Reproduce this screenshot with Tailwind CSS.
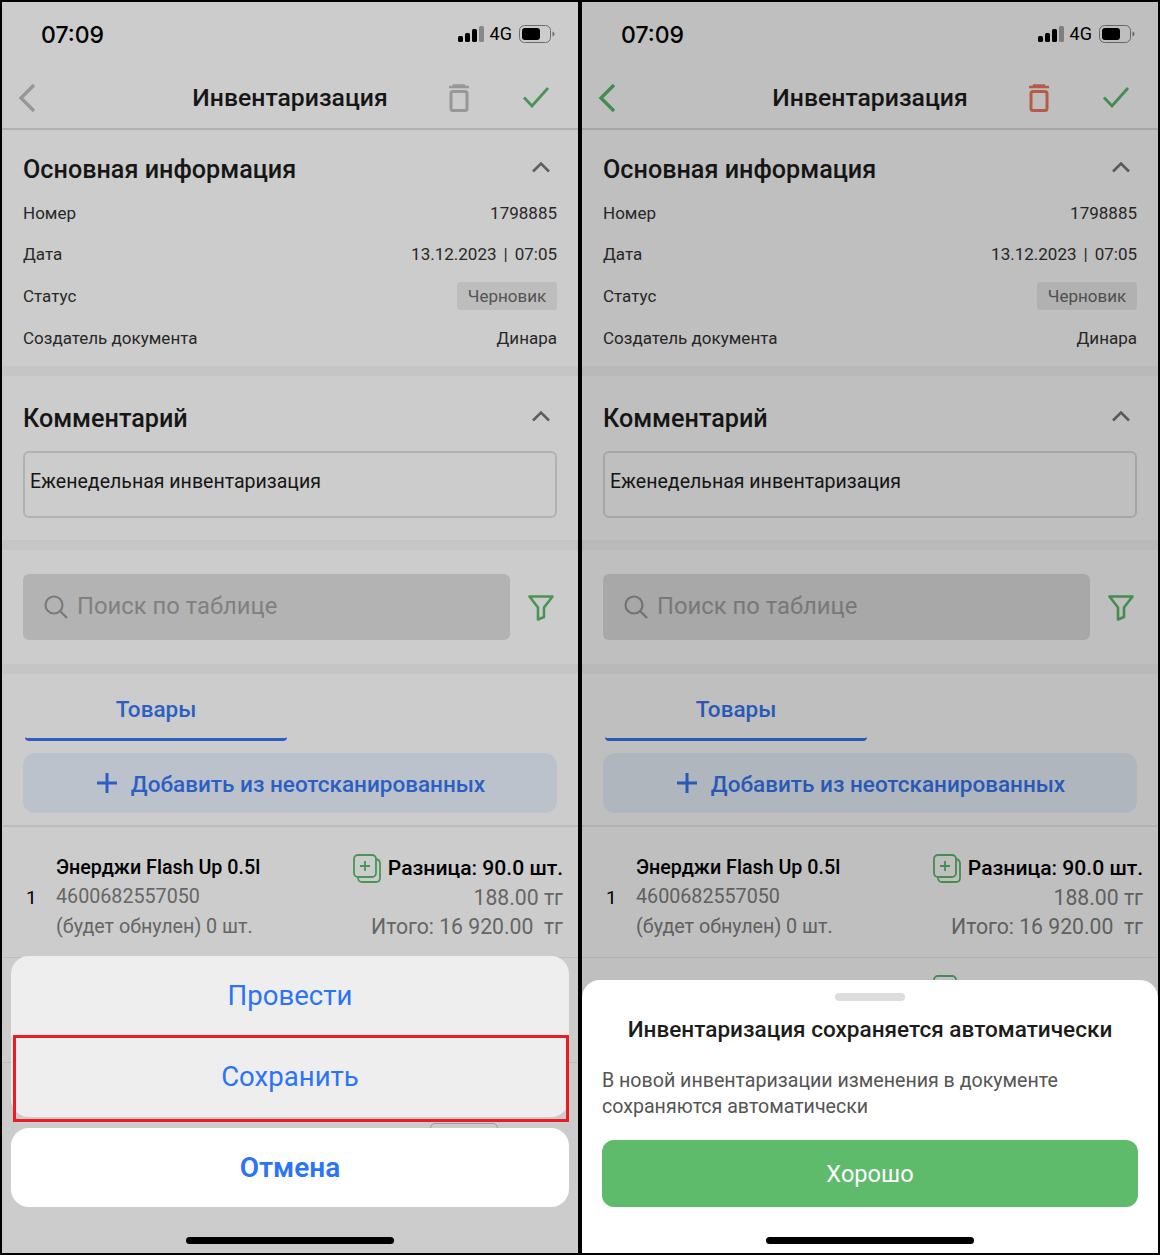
<!DOCTYPE html>
<html lang="ru">
<head>
  <meta charset="UTF-8" />
  <title>Инвентаризация</title>
  <script src="https://cdn.jsdelivr.net/npm/@tailwindcss/browser@4"></script>
</head>
<body class="bg-black font-['Roboto',sans-serif] text-[#1c1c1c]">
  <div class="w-[1160px] h-[1255px] bg-black p-[2px] flex gap-[4px] overflow-hidden">

    <!-- Left phone -->
    <div class="relative w-[576px] h-[1251px] bg-white overflow-hidden">
      <!-- Status bar -->
      <div class="h-[66px] flex items-start justify-between pt-[17px] pl-[39px] pr-[23px]">
        <span class="font-['Inter',sans-serif] font-medium text-[23px] leading-[32px] text-black">07:09</span>
        <div class="flex items-center gap-[6px] h-[30px]">
          <svg width="26" height="16" viewBox="0 0 26 16"><rect x="0" y="10" width="5" height="6" rx="1.5" fill="#000"/><rect x="7" y="7" width="5" height="9" rx="1.5" fill="#000"/><rect x="14" y="3" width="5" height="13" rx="1.5" fill="#000"/><rect x="21" y="0" width="5" height="16" rx="1.5" fill="#aaa"/></svg>
          <span class="text-[18px] leading-none text-black">4G</span>
          <svg width="36" height="18" viewBox="0 0 36 18" class="ml-[1px]"><rect x="0.5" y="0.5" width="31" height="17" rx="5" fill="none" stroke="#888"/><rect x="3" y="3" width="18" height="12" rx="3" fill="#000"/><path d="M33.5 6.5v5c1.2-.4 2-1.4 2-2.5s-.8-2.1-2-2.5z" fill="#888"/></svg>
        </div>
      </div>
      <!-- Nav bar -->
      <div class="h-[62px] relative flex items-center justify-center border-b-2 border-[#dedede]">
        <svg class="absolute left-[16px] top-[15px]" width="18" height="30" viewBox="0 0 18 30" fill="none"><path d="M16 2 3 15l13 13" stroke="#bdbdbd" stroke-width="3.4"/></svg>
        <span class="font-medium text-[24.75px] leading-[30px]">Инвентаризация</span>
        <svg class="absolute left-[446px] top-[16px]" width="22" height="28" viewBox="0 0 22 28" fill="none"><path d="M1 3h20M6 3V1.5h10V3" stroke="#bdbdbd" stroke-width="2.4"/><rect x="3" y="7.5" width="16" height="19" rx="2" stroke="#bdbdbd" stroke-width="3"/></svg>
        <svg class="absolute left-[520px] top-[18px]" width="28" height="22" viewBox="0 0 28 22" fill="none"><path d="M2 11.5 10 20 26 2" stroke="#5dbb6b" stroke-width="2.8"/></svg>
      </div>
      <!-- Main info -->
      <section class="h-[246px] px-[21px] pt-[23px] border-b-[10px] border-[#f7f7f7]">
        <div class="h-[34px] flex items-center justify-between">
          <h2 class="font-medium text-[25.2px] leading-[34px]">Основная информация</h2>
          <svg class="mr-[6px] mb-[6px]" width="20" height="12" viewBox="0 0 20 12" fill="none"><path d="M2 10.5 10 2.5l8 8" stroke="#777" stroke-width="2.6"/></svg>
        </div>
        <div class="mt-[14px] text-[17px] leading-[24px] text-[#333]">
          <div class="flex justify-between h-[41px]"><span>Номер</span><span>1798885</span></div>
          <div class="flex justify-between h-[42px]"><span>Дата</span><span>13.12.2023<span class="px-[7px]">|</span>07:05</span></div>
          <div class="flex justify-between items-center h-[42px] -mt-[10px]"><span class="pt-[1px]">Статус</span><span class="mt-[2px] h-[28px] w-[100px] rounded-[3px] bg-[#ededed] flex items-center justify-center text-[#6a6a6a] text-[17px]">Черновик</span></div>
          <div class="flex justify-between h-[42px] mt-[10px]"><span>Создатель документа</span><span>Динара</span></div>
        </div>
      </section>
      <!-- Comment -->
      <section class="h-[174px] px-[21px] pt-[26px] border-b-[10px] border-[#f7f7f7]">
        <div class="h-[34px] flex items-center justify-between">
          <h2 class="font-medium text-[25.2px] leading-[34px]">Комментарий</h2>
          <svg class="mr-[6px] mb-[6px]" width="20" height="12" viewBox="0 0 20 12" fill="none"><path d="M2 10.5 10 2.5l8 8" stroke="#777" stroke-width="2.6"/></svg>
        </div>
        <div class="mt-[15px] h-[67px] border-2 border-[#dedede] rounded-[6px] pl-[5px] flex items-center pb-[6px] text-[19.55px]">Еженедельная инвентаризация</div>
      </section>
      <!-- Search -->
      <section class="h-[124px] pl-[21px] pr-[24px] pt-[24px] border-b-[10px] border-[#f7f7f7] flex items-start justify-between">
        <div class="w-[487px] h-[66px] rounded-[6px] bg-[#e0e0e0] flex items-center pl-[21px] gap-[9px]">
          <svg width="24" height="24" viewBox="0 0 24 24" fill="none"><circle cx="10" cy="10" r="8.5" stroke="#9a9a9a" stroke-width="2.2"/><path d="m16 16 7 7" stroke="#9a9a9a" stroke-width="2.4"/></svg>
          <span class="text-[23.8px] text-[#a0a0a0]">Поиск по таблице</span>
        </div>
        <svg class="mt-[21px]" width="26" height="26" viewBox="0 0 26 26" fill="none"><path d="M1.5 1.5h23L16 12.5V22l-6 2.5v-12z" stroke="#5dbb6b" stroke-width="2.6" stroke-linejoin="round"/></svg>
      </section>
      <!-- Tab -->
      <div class="pl-[23px] h-[67px]">
        <div class="w-[262px] h-[67px] border-b-[3px] border-[#3677f5] rounded-b-[4px] flex items-center justify-center pt-[7px] font-medium text-[22.5px] text-[#3677f5]">Товары</div>
      </div>
      <!-- Add button -->
      <div class="px-[21px] pt-[12px] pb-[12px] border-b-2 border-[#ededed]">
        <div class="h-[60px] rounded-[12px] bg-[#ebf3fe] flex items-center justify-center gap-[14px] pl-[2px] text-[#3677f5]">
          <svg width="20" height="20" viewBox="0 0 20 20" fill="none"><path d="M10 0v20M0 10h20" stroke="#3677f5" stroke-width="3"/></svg>
          <span class="font-medium text-[22.5px] pt-[3px]">Добавить из неотсканированных</span>
        </div>
      </div>
      <!-- Row 1 -->
      <div class="h-[131px] flex items-start pl-[24px] pr-[15px] border-b border-[#ededed]">
        <span class="mt-[58px] w-[30px] text-[19px] leading-[26px] text-black">1</span>
        <div class="mt-[27px]">
          <p class="font-medium text-[19.7px] leading-[28px] text-black">Энерджи Flash Up 0.5l</p>
          <p class="text-[19.7px] leading-[30px] text-[#808080]">4600682557050</p>
          <p class="text-[19.7px] leading-[30px] text-[#808080]">(будет обнулен) 0 шт.</p>
        </div>
        <div class="ml-auto mt-[26px] flex flex-col items-end">
          <div class="flex items-center gap-[7px] h-[30px]">
            <svg width="28" height="29" viewBox="0 0 28 29" fill="none"><rect x="1" y="1" width="22" height="22" rx="4" stroke="#5dbb6b" stroke-width="1.8"/><path d="M12 7v10M7 12h10" stroke="#5dbb6b" stroke-width="1.8"/><path d="M23 5c2.5.5 4 2 4 4.5V24c0 2.5-1.5 4-4 4H9c-2.5 0-3.8-1.5-4-4" stroke="#5dbb6b" stroke-width="1.8"/></svg>
            <span class="font-medium text-[21.1px] text-black">Разница: 90.0 шт.</span>
          </div>
          <span class="text-[21.2px] leading-[30px] text-[#808080]">188.00 тг</span>
          <span class="text-[21.2px] leading-[28px] text-[#808080]">Итого: 16 920.00&nbsp; тг</span>
        </div>
      </div>
      <!-- Row 2 -->
      <div class="h-[105px] pt-[17px] pl-[351px] border-b border-[#ededed]">
        <svg width="28" height="29" viewBox="0 0 28 29" fill="none"><rect x="1" y="1" width="22" height="22" rx="4" stroke="#5dbb6b" stroke-width="1.8"/></svg>
      </div>
      <div class="pt-[60px] pl-[428px]">
        <div class="w-[68px] h-[28px] rounded-[5px] border border-[#c4c4c4]"></div>
      </div>
      <!-- Dim -->
      <div class="absolute inset-0 bg-black/20"></div>
      <!-- Action sheet -->
      <div class="absolute left-[9px] right-[9px] top-[954px] flex flex-col gap-[11px]">
        <div class="h-[161px] rounded-[18px] bg-[#eeeeee] text-[#2b74f8] text-[27.6px]">
          <div class="h-[80px] flex items-center justify-center">Провести</div>
          <div class="h-[81px] flex items-center justify-center">Сохранить</div>
        </div>
        <div class="h-[79px] rounded-[18px] bg-white flex items-center justify-center text-[#2b74f8] text-[28px] font-semibold">Отмена</div>
      </div>
      <div class="absolute left-[11px] top-[1033px] w-[556px] h-[87px] border-[3px] border-[#ed1c24]"></div>
      <div class="absolute left-[184px] top-[1235px] w-[208px] h-[7px] rounded-full bg-black"></div>
    </div>

    <!-- Right phone -->
    <div class="relative w-[576px] h-[1251px] bg-white overflow-hidden">
      <!-- Status bar -->
      <div class="h-[66px] flex items-start justify-between pt-[17px] pl-[39px] pr-[23px]">
        <span class="font-['Inter',sans-serif] font-medium text-[23px] leading-[32px] text-black">07:09</span>
        <div class="flex items-center gap-[6px] h-[30px]">
          <svg width="26" height="16" viewBox="0 0 26 16"><rect x="0" y="10" width="5" height="6" rx="1.5" fill="#000"/><rect x="7" y="7" width="5" height="9" rx="1.5" fill="#000"/><rect x="14" y="3" width="5" height="13" rx="1.5" fill="#000"/><rect x="21" y="0" width="5" height="16" rx="1.5" fill="#aaa"/></svg>
          <span class="text-[18px] leading-none text-black">4G</span>
          <svg width="36" height="18" viewBox="0 0 36 18" class="ml-[1px]"><rect x="0.5" y="0.5" width="31" height="17" rx="5" fill="none" stroke="#888"/><rect x="3" y="3" width="18" height="12" rx="3" fill="#000"/><path d="M33.5 6.5v5c1.2-.4 2-1.4 2-2.5s-.8-2.1-2-2.5z" fill="#888"/></svg>
        </div>
      </div>
      <!-- Nav bar -->
      <div class="h-[62px] relative flex items-center justify-center border-b-2 border-[#dedede]">
        <svg class="absolute left-[16px] top-[15px]" width="18" height="30" viewBox="0 0 18 30" fill="none"><path d="M16 2 3 15l13 13" stroke="#5dbb6b" stroke-width="3.4"/></svg>
        <span class="font-medium text-[24.75px] leading-[30px]">Инвентаризация</span>
        <svg class="absolute left-[446px] top-[16px]" width="22" height="28" viewBox="0 0 22 28" fill="none"><path d="M1 3h20M6 3V1.5h10V3" stroke="#f47a60" stroke-width="2.4"/><rect x="3" y="7.5" width="16" height="19" rx="2" stroke="#f47a60" stroke-width="3"/></svg>
        <svg class="absolute left-[520px] top-[18px]" width="28" height="22" viewBox="0 0 28 22" fill="none"><path d="M2 11.5 10 20 26 2" stroke="#5dbb6b" stroke-width="2.8"/></svg>
      </div>
      <!-- Main info -->
      <section class="h-[246px] px-[21px] pt-[23px] border-b-[10px] border-[#f7f7f7]">
        <div class="h-[34px] flex items-center justify-between">
          <h2 class="font-medium text-[25.2px] leading-[34px]">Основная информация</h2>
          <svg class="mr-[6px] mb-[6px]" width="20" height="12" viewBox="0 0 20 12" fill="none"><path d="M2 10.5 10 2.5l8 8" stroke="#777" stroke-width="2.6"/></svg>
        </div>
        <div class="mt-[14px] text-[17px] leading-[24px] text-[#333]">
          <div class="flex justify-between h-[41px]"><span>Номер</span><span>1798885</span></div>
          <div class="flex justify-between h-[42px]"><span>Дата</span><span>13.12.2023<span class="px-[7px]">|</span>07:05</span></div>
          <div class="flex justify-between items-center h-[42px] -mt-[10px]"><span class="pt-[1px]">Статус</span><span class="mt-[2px] h-[28px] w-[100px] rounded-[3px] bg-[#ededed] flex items-center justify-center text-[#6a6a6a] text-[17px]">Черновик</span></div>
          <div class="flex justify-between h-[42px] mt-[10px]"><span>Создатель документа</span><span>Динара</span></div>
        </div>
      </section>
      <!-- Comment -->
      <section class="h-[174px] px-[21px] pt-[26px] border-b-[10px] border-[#f7f7f7]">
        <div class="h-[34px] flex items-center justify-between">
          <h2 class="font-medium text-[25.2px] leading-[34px]">Комментарий</h2>
          <svg class="mr-[6px] mb-[6px]" width="20" height="12" viewBox="0 0 20 12" fill="none"><path d="M2 10.5 10 2.5l8 8" stroke="#777" stroke-width="2.6"/></svg>
        </div>
        <div class="mt-[15px] h-[67px] border-2 border-[#dedede] rounded-[6px] pl-[5px] flex items-center pb-[6px] text-[19.55px]">Еженедельная инвентаризация</div>
      </section>
      <!-- Search -->
      <section class="h-[124px] pl-[21px] pr-[24px] pt-[24px] border-b-[10px] border-[#f7f7f7] flex items-start justify-between">
        <div class="w-[487px] h-[66px] rounded-[6px] bg-[#e0e0e0] flex items-center pl-[21px] gap-[9px]">
          <svg width="24" height="24" viewBox="0 0 24 24" fill="none"><circle cx="10" cy="10" r="8.5" stroke="#9a9a9a" stroke-width="2.2"/><path d="m16 16 7 7" stroke="#9a9a9a" stroke-width="2.4"/></svg>
          <span class="text-[23.8px] text-[#a0a0a0]">Поиск по таблице</span>
        </div>
        <svg class="mt-[21px]" width="26" height="26" viewBox="0 0 26 26" fill="none"><path d="M1.5 1.5h23L16 12.5V22l-6 2.5v-12z" stroke="#5dbb6b" stroke-width="2.6" stroke-linejoin="round"/></svg>
      </section>
      <!-- Tab -->
      <div class="pl-[23px] h-[67px]">
        <div class="w-[262px] h-[67px] border-b-[3px] border-[#3677f5] rounded-b-[4px] flex items-center justify-center pt-[7px] font-medium text-[22.5px] text-[#3677f5]">Товары</div>
      </div>
      <!-- Add button -->
      <div class="px-[21px] pt-[12px] pb-[12px] border-b-2 border-[#ededed]">
        <div class="h-[60px] rounded-[12px] bg-[#ebf3fe] flex items-center justify-center gap-[14px] pl-[2px] text-[#3677f5]">
          <svg width="20" height="20" viewBox="0 0 20 20" fill="none"><path d="M10 0v20M0 10h20" stroke="#3677f5" stroke-width="3"/></svg>
          <span class="font-medium text-[22.5px] pt-[3px]">Добавить из неотсканированных</span>
        </div>
      </div>
      <!-- Row 1 -->
      <div class="h-[131px] flex items-start pl-[24px] pr-[15px] border-b border-[#ededed]">
        <span class="mt-[58px] w-[30px] text-[19px] leading-[26px] text-black">1</span>
        <div class="mt-[27px]">
          <p class="font-medium text-[19.7px] leading-[28px] text-black">Энерджи Flash Up 0.5l</p>
          <p class="text-[19.7px] leading-[30px] text-[#808080]">4600682557050</p>
          <p class="text-[19.7px] leading-[30px] text-[#808080]">(будет обнулен) 0 шт.</p>
        </div>
        <div class="ml-auto mt-[26px] flex flex-col items-end">
          <div class="flex items-center gap-[7px] h-[30px]">
            <svg width="28" height="29" viewBox="0 0 28 29" fill="none"><rect x="1" y="1" width="22" height="22" rx="4" stroke="#5dbb6b" stroke-width="1.8"/><path d="M12 7v10M7 12h10" stroke="#5dbb6b" stroke-width="1.8"/><path d="M23 5c2.5.5 4 2 4 4.5V24c0 2.5-1.5 4-4 4H9c-2.5 0-3.8-1.5-4-4" stroke="#5dbb6b" stroke-width="1.8"/></svg>
            <span class="font-medium text-[21.1px] text-black">Разница: 90.0 шт.</span>
          </div>
          <span class="text-[21.2px] leading-[30px] text-[#808080]">188.00 тг</span>
          <span class="text-[21.2px] leading-[28px] text-[#808080]">Итого: 16 920.00&nbsp; тг</span>
        </div>
      </div>
      <!-- Row 2 -->
      <div class="h-[105px] pt-[17px] pl-[351px] border-b border-[#ededed]">
        <svg width="28" height="29" viewBox="0 0 28 29" fill="none"><rect x="1" y="1" width="22" height="22" rx="4" stroke="#5dbb6b" stroke-width="1.8"/></svg>
      </div>
      <!-- Dim -->
      <div class="absolute inset-0 bg-black/25"></div>
      <!-- Bottom sheet -->
      <div class="absolute left-0 right-0 top-[978px] bottom-0 rounded-t-[18px] bg-white px-[20px] pt-[13px]">
        <div class="mx-auto w-[70px] h-[8px] rounded-full bg-[#dddddd]"></div>
        <h3 class="mt-[15px] text-center font-medium text-[22.55px] leading-[28px]">Инвентаризация сохраняется автоматически</h3>
        <p class="mt-[24px] text-[19.6px] leading-[26px] text-[#555]">В новой инвентаризации изменения в документе<br>сохраняются автоматически</p>
        <div class="mt-[20px] h-[67px] rounded-[12px] bg-[#5dbb6b] flex items-center justify-center pt-[3px] text-white text-[23.6px]">Хорошо</div>
      </div>
      <div class="absolute left-[184px] top-[1235px] w-[208px] h-[7px] rounded-full bg-black"></div>
    </div>

  </div>
</body>
</html>
